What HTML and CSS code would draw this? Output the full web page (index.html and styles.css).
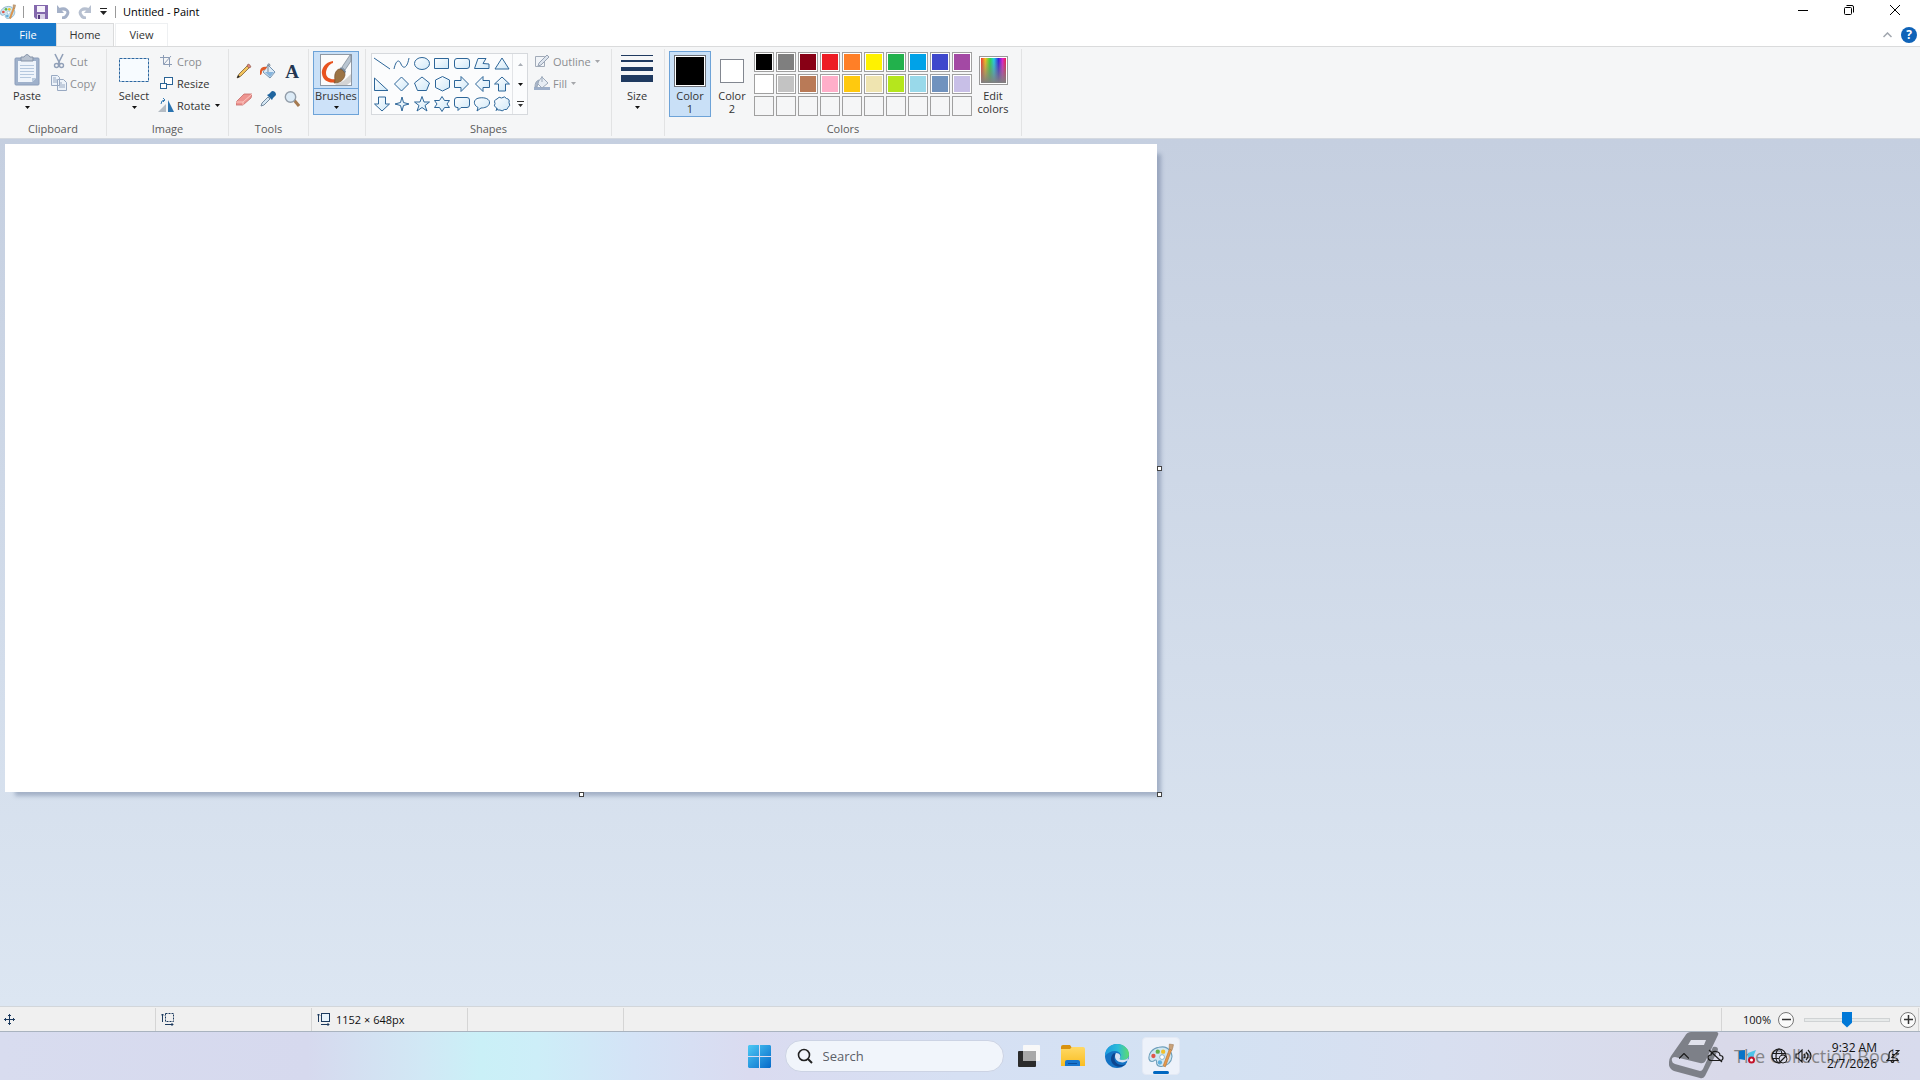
FILE: index.html
```html
<!DOCTYPE html>
<html lang="en">
<head>
    <meta charset="UTF-8">
    <meta name="viewport" content="width=device-width, initial-scale=1.0">
    <title>Untitled - Paint</title>
    <link rel="stylesheet" href="styles.css">
</head>
<body>
    <!-- Shared icons -->
    <svg class="defs" aria-hidden="true">
        <defs>
            <linearGradient id="shapeFill" x1="0" y1="0" x2="1" y2="1">
                <stop offset="0" stop-color="#ffffff"/>
                <stop offset="1" stop-color="#cfe8f8"/>
            </linearGradient>
            <linearGradient id="winFill" x1="0" y1="0" x2="1" y2="1">
                <stop offset="0" stop-color="#4cc9f5"/>
                <stop offset="1" stop-color="#0669c9"/>
            </linearGradient>
            <linearGradient id="rainbow">
                <stop offset="0" stop-color="#f03030"/>
                <stop offset=".17" stop-color="#f5c020"/>
                <stop offset=".36" stop-color="#30d840"/>
                <stop offset=".52" stop-color="#20d0e8"/>
                <stop offset=".7" stop-color="#3020e0"/>
                <stop offset=".86" stop-color="#e020d0"/>
                <stop offset="1" stop-color="#e82040"/>
            </linearGradient>
            <linearGradient id="greyDown" x1="0" y1="0" x2="0" y2="1">
                <stop offset="0" stop-color="#808080" stop-opacity="0"/>
                <stop offset="1" stop-color="#808080"/>
            </linearGradient>
            <linearGradient id="edgeTop" x1="0" y1="0" x2="1" y2="0">
                <stop offset="0" stop-color="#1a9ae0"/>
                <stop offset=".55" stop-color="#2bbcd8"/>
                <stop offset="1" stop-color="#5fdc6c"/>
            </linearGradient>
            <linearGradient id="folderFill" x1="0" y1="0" x2="0" y2="1">
                <stop offset="0" stop-color="#ffd965"/>
                <stop offset="1" stop-color="#f9bd22"/>
            </linearGradient>
            <symbol id="arrow" viewBox="0 0 5 3"><path d="M0 0h5L2.500 3z" fill="currentColor"/></symbol>
            <symbol id="palette" viewBox="0 0 24 24">
                <path d="M10 4C4 5 0 10 1 15c1 3 4 2 5 1 2-1 2 1 2 3 1 4 7 3 11 0 4-4 4-9 1-12-2-3-6-4-10-3z" fill="#cfe6f2" stroke="#6d9fbb"/>
                <circle cx="5" cy="12" r="2" fill="#e05548"/>
                <circle cx="9" cy="8" r="2" fill="#64b64c"/>
                <circle cx="14" cy="8" r="2" fill="#f0c02c"/>
                <circle cx="13" cy="13" r="2.2" fill="#fff" stroke="#7aa7c0" stroke-width=".7"/>
                <circle cx="11" cy="18" r="2" fill="#5fb0de"/>
                <path d="M14 21 20 5l2 1-6 16z" fill="#e89a4a" stroke="#b97434" stroke-width=".6"/>
                <path d="m19.500 5 .2-4 3.800.5-.5 2.500L22 7z" fill="#c9a27a" stroke="#9c7650" stroke-width=".5"/>
            </symbol>
        </defs>
    </svg>

    <div class="window">
        <header class="titlebar">
            <div class="quick-access">
                <svg class="app-icon" viewBox="0 0 24 24"><use href="#palette"/></svg>
                <span class="divider"></span>
                <button class="qa-btn" aria-label="Save">
                    <svg width="14" height="14" viewBox="0 0 14 14"><path d="M0 0h14v14H2l-2-2z" fill="#8468ad"/><path d="M3 1h8v6H3z" fill="#f5f1fa"/><path d="M3 9h8v5H3z" fill="#d8d0e6"/><path d="M4 10h2v4H4z" fill="#54397d"/></svg>
                </button>
                <button class="qa-btn" aria-label="Undo">
                    <svg width="14" height="14" viewBox="0 0 14 14"><path d="M3 5c6-3 11 1 8 5-1 2-3 3-5 3" fill="none" stroke="#a5b1c8" stroke-width="3"/><path d="M1 0v8h7z" fill="#a5b1c8"/></svg>
                </button>
                <button class="qa-btn" aria-label="Redo">
                    <svg width="14" height="14" viewBox="0 0 14 14"><path d="M11 5C5 2 0 6 3 10c1 2 3 3 5 3" fill="none" stroke="#b7c0d0" stroke-width="3"/><path d="M13 0v8H6z" fill="#b7c0d0"/></svg>
                </button>
                <button class="qa-more" aria-label="Customize Quick Access Toolbar">
                    <svg width="7" height="7" viewBox="0 0 7 7"><path d="M0 0h7v1H0zM0 3h7L3.500 7z" fill="#222"/></svg>
                </button>
                <span class="divider"></span>
            </div>
            <h1 class="title">Untitled - Paint</h1>
            <div class="window-controls">
                <button aria-label="Minimize"><svg width="10" height="10"><path d="M0 5.500h10" class="ctl"/></svg></button>
                <button aria-label="Restore"><svg width="10" height="10"><rect x=".5" y="2.500" width="7" height="7" rx="1" class="ctl"/><path d="M2.500.5H8q1.500 0 1.500 1.500v5.500" class="ctl"/></svg></button>
                <button aria-label="Close"><svg width="10" height="10"><path d="m0 0 10 10M10 0 0 10" class="ctl"/></svg></button>
            </div>
        </header>

        <nav class="tabs">
            <button class="tab tab-file">File</button>
            <button class="tab tab-active">Home</button>
            <button class="tab tab-view">View</button>
            <div class="tabs-end">
                <button aria-label="Collapse the Ribbon"><svg width="9" height="6"><path d="m.5 5 4-4 4 4" fill="none" stroke="#a0a6ae" stroke-width="1.500"/></svg></button>
                <button class="help" aria-label="Help">?</button>
            </div>
        </nav>

        <div class="ribbon">
            <section class="group group-clipboard">
                <div class="group-body">
                    <button class="big-btn paste">
                        <svg width="26" height="32" viewBox="0 0 26 32">
                            <rect x="1" y="4" width="24" height="27" rx="1" fill="#9fb1cb" stroke="#8b9dba"/>
                            <path d="M4 7h18v17l-4 4H4z" fill="#eef4fb"/>
                            <path d="M6 11.500h14M6 14.500h14M6 17.500h14M6 20.500h14M6 23.500h11" stroke="#b5c8de"/>
                            <path d="M22 24h-4v4z" fill="#b7c9dd"/>
                            <path d="M7 3h3q3-5 6 0h3v4H7z" fill="#b8c2d0" stroke="#8593a8"/>
                        </svg>
                        <span>Paste</span>
                        <svg class="arrow"><use href="#arrow"/></svg>
                    </button>
                    <div class="small-list">
                        <button class="small-btn disabled" disabled>
                            <svg width="16" height="16" viewBox="0 0 16 16"><path d="m4 1 5 10M12 1 7 11" stroke="#91a0b8" stroke-width="1.600"/><circle cx="5.500" cy="12.500" r="2" fill="none" stroke="#91a0b8" stroke-width="1.400"/><circle cx="10.500" cy="12.500" r="2" fill="none" stroke="#91a0b8" stroke-width="1.400"/></svg>
                            Cut
                        </button>
                        <button class="small-btn disabled" disabled>
                            <svg width="16" height="16" viewBox="0 0 16 16"><path d="M.5.5h6l2 2v8h-8zM6.500 4.500h6l3 3v8h-9z" fill="#edf3fa" stroke="#98a9c2"/><path d="M2 3h3M2 5h4M2 7h4M8 8h3M8 10h6M8 12h6" stroke="#98a9c2"/></svg>
                            Copy
                        </button>
                    </div>
                </div>
                <h2>Clipboard</h2>
            </section>

            <section class="group group-image">
                <div class="group-body">
                    <button class="big-btn select">
                        <svg width="30" height="32" viewBox="0 0 30 32"><rect x=".5" y="4.500" width="29" height="23" fill="#f7fbff" stroke="#2b66a0" stroke-dasharray="3 1"/></svg>
                        <span>Select</span>
                        <svg class="arrow"><use href="#arrow"/></svg>
                    </button>
                    <div class="small-list">
                        <button class="small-btn disabled" disabled>
                            <svg width="16" height="16" viewBox="0 0 16 16"><path d="M5.500 2v9.500H14M2 4.500h9.500V14M6 11l7-8" fill="none" stroke="#8d9db6"/></svg>
                            Crop
                        </button>
                        <button class="small-btn">
                            <svg width="16" height="16" viewBox="0 0 16 16"><rect x="6.500" y="2.500" width="8" height="7" fill="#fff" stroke="#2a6496"/><rect x="2.500" y="8.500" width="6" height="5" fill="#fff" stroke="#2a6496"/></svg>
                            Resize
                        </button>
                        <button class="small-btn">
                            <svg width="16" height="16" viewBox="0 0 16 16"><path d="M8 7v8H0z" fill="#b4bcc4"/><path d="M10 3v12h6z" fill="#2a73b0"/><path d="M3 7q0-4 4-4M5 1l2 2-2 2" fill="none" stroke="#337ab5"/></svg>
                            Rotate
                            <svg class="arrow"><use href="#arrow"/></svg>
                        </button>
                    </div>
                </div>
                <h2>Image</h2>
            </section>

            <section class="group group-tools">
                <div class="group-body tool-grid">
                    <button aria-label="Pencil"><svg width="16" height="16" viewBox="0 0 16 16"><path d="m1 15 2-4 9-9 2 2-9 9z" fill="#f2c35c" stroke="#7d6238" stroke-width=".8"/><path d="m1 15 1-3 2 2z" fill="#222"/><path d="m11 3 1-2q2 0 3 3l-2 1z" fill="#df8a7e" stroke="#8c5244" stroke-width=".6"/></svg></button>
                    <button aria-label="Fill with color"><svg width="16" height="16" viewBox="0 0 16 16"><path d="m8 2 7 7-5 6-7-6z" fill="#dceaf6" stroke="#7291af"/><path d="m5 9 9 0-4 5z" fill="#86b4dc"/><path d="M8 9V1q2-1 2 2" fill="none" stroke="#7a8795"/><path d="M7 4Q1 3 0 8v4q2 0 2-4l4-2z" fill="#e05a28"/></svg></button>
                    <button class="text-tool" aria-label="Text">A</button>
                    <button aria-label="Eraser"><svg width="16" height="16" viewBox="0 0 16 16"><path d="m0 11 8-8h8l-1 4-8 7H0z" fill="#ee9490" stroke="#c46c6a" stroke-width=".8"/><path d="m0 11 7 0 9-8M7 11v3" fill="none" stroke="#fbc6c0"/></svg></button>
                    <button aria-label="Color picker"><svg width="16" height="16" viewBox="0 0 16 16"><path d="m1 15 1-3 6-6 2 2-6 6z" fill="#d5e7f4" stroke="#667f96" stroke-width=".9"/><path d="m7 4 2-1 3-3q4 0 4 4l-3 3-1 2z" fill="#20659f"/></svg></button>
                    <button aria-label="Magnifier"><svg width="16" height="16" viewBox="0 0 16 16"><path d="m10 9 5 6" stroke="#a57a50" stroke-width="3"/><circle cx="6.500" cy="6" r="5.200" fill="#dcebf7" stroke="#929da9" stroke-width="1.400"/></svg></button>
                </div>
                <h2>Tools</h2>
            </section>

            <section class="group group-brushes">
                <div class="group-body">
                    <button class="big-btn brushes">
                        <svg width="32" height="32" viewBox="0 0 32 32">
                            <rect x=".5" y=".5" width="31" height="31" fill="#fbfbfb" stroke="#8e98a4"/>
                            <path d="M17 29c5 0 9-4 14-9v8l-4 3H15z" fill="#d4d4d4"/>
                            <path d="M13 7C5 8 1 15 2 20c1 7 8 10 15 8l-1-3C11 26 6 24 6 19c0-4 3-9 7-10z" fill="#e8531f"/>
                            <path d="m22 13 8-12h1v6l-6 9z" fill="#b9c5d1" stroke="#77828f" stroke-width=".7"/>
                            <path d="m21 13 5 4-1 3-6-4z" fill="#6f8296"/>
                            <path d="M19 15c3 0 6 3 6 6-1 5-5 8-11 8 2-2 0-5 1-9 1-3 2-4 4-5z" fill="#9b7344" stroke="#77502c" stroke-width=".7"/>
                        </svg>
                        <span>Brushes</span>
                        <svg class="arrow"><use href="#arrow"/></svg>
                    </button>
                </div>
            </section>

            <section class="group group-shapes">
                <div class="group-body">
                    <div class="gallery">
                        <div class="shape-grid">
                            <button aria-label="Line"><svg viewBox="0 0 18 18"><path d="m1 3 16 11"/></svg></button>
                            <button aria-label="Curve"><svg viewBox="0 0 18 18"><path class="open" d="M1 14C3 5 6 4 8 9s6 5 8-6"/></svg></button>
                            <button aria-label="Oval"><svg viewBox="0 0 18 18"><ellipse cx="9" cy="8.500" rx="7.500" ry="6"/></svg></button>
                            <button aria-label="Rectangle"><svg viewBox="0 0 18 18"><path d="M1.500 3.500h14v10h-14z"/></svg></button>
                            <button aria-label="Rounded rectangle"><svg viewBox="0 0 18 18"><rect x="1.500" y="3.500" width="15" height="10" rx="2.500"/></svg></button>
                            <button aria-label="Polygon"><svg viewBox="0 0 18 18"><path d="M1.500 13.500 5 3.500h8l-3 5 6 .5v4.500z"/></svg></button>
                            <button aria-label="Triangle"><svg viewBox="0 0 18 18"><path d="m9 3 7 11H2z"/></svg></button>
                            <button aria-label="Right triangle"><svg viewBox="0 0 18 18"><path d="M1.500 3 15 15.500H1.500z"/></svg></button>
                            <button aria-label="Diamond"><svg viewBox="0 0 18 18"><path d="m8.500 2 7 7-7 7-7-7z"/></svg></button>
                            <button aria-label="Pentagon"><svg viewBox="0 0 18 18"><path d="m9 2 7.500 6-3 7.500h-9L1.500 8z"/></svg></button>
                            <button aria-label="Hexagon"><svg viewBox="0 0 18 18"><path d="m9.500 1.500 7 3.500v7.500l-7 3.500-7-3.500V5z"/></svg></button>
                            <button aria-label="Right arrow"><svg viewBox="0 0 18 18"><path d="M1.500 5.500H8v-4L15.500 9 8 16.500v-4H1.500z"/></svg></button>
                            <button aria-label="Left arrow"><svg viewBox="0 0 18 18"><path d="M16.500 5.500H10v-4L2.500 9l7.500 7.500v-4h6.500z"/></svg></button>
                            <button aria-label="Up arrow"><svg viewBox="0 0 18 18"><path d="M5.500 16V9h-4L9 2l7.500 7h-4v7z"/></svg></button>
                            <button aria-label="Down arrow"><svg viewBox="0 0 18 18"><path d="M5.500 2v7h-4L9 16l7.500-7h-4V2z"/></svg></button>
                            <button aria-label="Four-point star"><svg viewBox="0 0 18 18"><path d="m9 2 1.500 5.500L16 9l-5.500 1.500L9 16l-1.500-5.500L2 9l5.500-1.500z"/></svg></button>
                            <button aria-label="Five-point star"><svg viewBox="0 0 18 18"><path d="m9 1.500 2 5.500h5.500L12 10.500l2 5.500-5-3.500L4 16l2-5.500L1.500 7H7z"/></svg></button>
                            <button aria-label="Six-point star"><svg viewBox="0 0 18 18"><path d="m9 1.500 2.500 4h5L14 9l2.500 3.500h-5L9 16.500l-2.500-4h-5L4 9 1.500 5.500h5z"/></svg></button>
                            <button aria-label="Rounded rectangular callout"><svg viewBox="0 0 18 18"><path d="M4 2.500h10q2.500 0 2.500 2.500v5q0 2.500-2.500 2.500H8L5 15.500v-3H4Q1.500 12.500 1.500 10V5Q1.500 2.500 4 2.500z"/></svg></button>
                            <button aria-label="Oval callout"><svg viewBox="0 0 18 18"><path d="M5 12.500C0 10 0 4 6 3c6-1 11 1 10.500 5S11 13 8 13l-4 3z"/></svg></button>
                            <button aria-label="Cloud callout"><svg viewBox="0 0 18 18"><path d="M4 4q2-3 4.500-1Q12 .5 13.500 3.500q3.500.5 2.500 4 2 3-1 5-1 3-3.500 2-2.500 2.500-4.500.5-3 1-3.500-2-3.500-2-1.500-4.500Q.5 5 4 4zM4 13l-1 3"/></svg></button>
                        </div>
                        <div class="gallery-scroll">
                            <button aria-label="Scroll up" disabled><svg width="5" height="3"><path d="M0 3h5L2.500 0z" fill="#a9aeb5"/></svg></button>
                            <button aria-label="Scroll down"><svg class="arrow"><use href="#arrow"/></svg></button>
                            <button aria-label="More shapes"><svg width="7" height="6"><path d="M0 0h7v1H0zM1 3h5L3.500 6z" fill="#333"/></svg></button>
                        </div>
                    </div>
                    <div class="small-list">
                        <button class="small-btn disabled" disabled>
                            <svg width="16" height="16" viewBox="0 0 16 16"><path d="M1.500 3.500h9v10h-9z" fill="#f1f4f8" stroke="#a2abb8"/><path d="m4 13 1-3 8-8 2 2-8 8z" fill="#dde4ed" stroke="#98a3b4"/></svg>
                            Outline
                            <svg class="arrow"><use href="#arrow"/></svg>
                        </button>
                        <button class="small-btn disabled" disabled>
                            <svg width="16" height="16" viewBox="0 0 16 16"><path d="M0 12h16v3H0z" fill="#9dafca"/><path d="m8 2 6 6-6 5-5-5z" fill="#e7edf4" stroke="#9ca9ba"/><path d="M8 7V1M5 5Q1 6 1 12h2z" fill="#a9b6ca" stroke="#9ca9ba"/></svg>
                            Fill
                            <svg class="arrow"><use href="#arrow"/></svg>
                        </button>
                    </div>
                </div>
                <h2>Shapes</h2>
            </section>

            <section class="group group-size">
                <div class="group-body">
                    <button class="big-btn size">
                        <svg width="32" height="32" viewBox="0 0 32 32"><path d="M0 1h32v1H0zM0 6h32v2H0zM0 13h32v4H0zM0 21h32v7H0z" fill="#1f3a60"/></svg>
                        <span>Size</span>
                        <svg class="arrow"><use href="#arrow"/></svg>
                    </button>
                </div>
            </section>

            <section class="group group-colors">
                <div class="group-body">
                    <button class="color-btn color-btn-active"><span class="well well-large"></span>Color<br>1</button>
                    <button class="color-btn"><span class="well well-small"></span>Color<br>2</button>
                    <div class="swatches">
                        <button class="swatch black" aria-label="Black"></button>
                        <button class="swatch gray" aria-label="Gray-50%"></button>
                        <button class="swatch dark-red" aria-label="Dark red"></button>
                        <button class="swatch red" aria-label="Red"></button>
                        <button class="swatch orange" aria-label="Orange"></button>
                        <button class="swatch yellow" aria-label="Yellow"></button>
                        <button class="swatch green" aria-label="Green"></button>
                        <button class="swatch turquoise" aria-label="Turquoise"></button>
                        <button class="swatch indigo" aria-label="Indigo"></button>
                        <button class="swatch purple" aria-label="Purple"></button>
                        <button class="swatch white" aria-label="White"></button>
                        <button class="swatch light-gray" aria-label="Gray-25%"></button>
                        <button class="swatch brown" aria-label="Brown"></button>
                        <button class="swatch rose" aria-label="Rose"></button>
                        <button class="swatch gold" aria-label="Gold"></button>
                        <button class="swatch light-yellow" aria-label="Light yellow"></button>
                        <button class="swatch lime" aria-label="Lime"></button>
                        <button class="swatch light-turquoise" aria-label="Light turquoise"></button>
                        <button class="swatch blue-gray" aria-label="Blue-gray"></button>
                        <button class="swatch lavender" aria-label="Lavender"></button>
                        <button class="swatch" aria-label="Custom 1"></button>
                        <button class="swatch" aria-label="Custom 2"></button>
                        <button class="swatch" aria-label="Custom 3"></button>
                        <button class="swatch" aria-label="Custom 4"></button>
                        <button class="swatch" aria-label="Custom 5"></button>
                        <button class="swatch" aria-label="Custom 6"></button>
                        <button class="swatch" aria-label="Custom 7"></button>
                        <button class="swatch" aria-label="Custom 8"></button>
                        <button class="swatch" aria-label="Custom 9"></button>
                        <button class="swatch" aria-label="Custom 10"></button>
                    </div>
                    <button class="color-btn">
                        <svg class="rainbow" width="29" height="29" viewBox="0 0 29 29"><rect x=".5" y=".5" width="28" height="28" fill="#fff" stroke="#999"/><path d="M2 2h25v25H2z" fill="url(#rainbow)"/><path d="M2 2h25v25H2z" fill="url(#greyDown)"/></svg>
                        Edit<br>colors
                    </button>
                </div>
                <h2>Colors</h2>
            </section>
        </div>

        <main class="workspace">
            <div class="canvas">
                <span class="handle handle-right"></span>
                <span class="handle handle-bottom"></span>
                <span class="handle handle-corner"></span>
            </div>
        </main>

        <footer class="statusbar">
            <div class="status-cell"><svg width="11" height="11" viewBox="0 0 11 11"><path d="M5.500 0v11M0 5.500h11M4 2l1.500-1.500L7 2M4 9l1.500 1.500L7 9M2 4 .5 5.500 2 7M9 4l1.500 1.500L9 7" fill="none" stroke="#1c3a5e"/></svg></div>
            <div class="status-cell"><svg width="14" height="13" viewBox="0 0 14 13"><rect x="4.500" y=".5" width="8" height="8" fill="none" stroke="#1c3a5e" stroke-dasharray="2 1"/><path d="M1.500 9V1M0 2.500 1.500 1 3 2.500M4 11.500h8M10.500 10l1.500 1.500-1.500 1.500" fill="none" stroke="#1c3a5e"/></svg></div>
            <div class="status-cell"><svg width="14" height="13" viewBox="0 0 14 13"><rect x="4.500" y=".5" width="8" height="8" fill="#e8f4fc" stroke="#1c3a5e"/><path d="M1.500 9V1M0 2.500 1.500 1 3 2.500M4 11.500h8M10.500 10l1.500 1.500-1.500 1.500" fill="none" stroke="#1c3a5e"/></svg>1152 × 648px</div>
            <div class="status-cell"></div>
            <div class="zoom">
                <label for="zoom">100%</label>
                <button class="zoom-btn" aria-label="Zoom out"><svg width="9" height="9"><path d="M0 4.500h9" class="zoom-mark"/></svg></button>
                <input type="range" id="zoom" min="0" max="100" value="50">
                <button class="zoom-btn" aria-label="Zoom in"><svg width="9" height="9"><path d="M0 4.500h9M4.500 0v9" class="zoom-mark"/></svg></button>
            </div>
        </footer>
    </div>

    <div class="taskbar">
        <div class="task-items">
            <button class="task-btn" aria-label="Start"><svg width="23" height="23" viewBox="0 0 23 23"><path d="M1 0h10v11H0V1zM12 0h10l1 1v10H12zM0 12h11v11H1l-1-1zM12 12h11v10l-1 1H12z" fill="url(#winFill)"/></svg></button>
            <label class="search">
                <svg width="16" height="16" viewBox="0 0 16 16"><circle cx="7" cy="7" r="5.500" fill="none" stroke="#222" stroke-width="1.600"/><path d="m11 11 4 4" stroke="#222" stroke-width="2"/></svg>
                <input type="text" placeholder="Search" aria-label="Search">
            </label>
            <button class="task-btn" aria-label="Task view"><svg width="24" height="24" viewBox="0 0 24 24"><rect x="6" y="1" width="17" height="16" rx="1" fill="#f8f8f8"/><rect x="1" y="7" width="18" height="16" rx="1" fill="#2b2b2b"/><path d="M6 7h13v10H6z" fill="#a8a8a8"/></svg></button>
            <button class="task-btn" aria-label="File Explorer"><svg width="24" height="24" viewBox="0 0 24 24"><path d="M0 3q0-2 2-2h7l2 3v4H0z" fill="#d9920e"/><path d="M0 5h9l2-2h11q2 0 2 2v17H0z" fill="url(#folderFill)"/><path d="M4 22v-4q0-2 2-2h11q2 0 2 2v4z" fill="#1876ce"/><path d="M7 19h9v1H7z" fill="#0b4f9c"/></svg></button>
            <button class="task-btn" aria-label="Microsoft Edge"><svg width="24" height="24" viewBox="0 0 24 24"><circle cx="12" cy="12" r="12" fill="#1473c4"/><path d="M0 12C0 5 5 0 12 0s12 5 12 10c0 4-3 6-6 6-2 0-4-1-3-2 2-3 0-7-5-7C6 7 2 9 0 12z" fill="url(#edgeTop)"/><path d="M9 9c-4 3-4 9 0 12 4 3 9 2 12-1-4 2-9 1-11-3-1-3-1-5 1-7z" fill="#0c4690"/><path d="M11 9c-2 3-1 8 4 9 3 1 6 0 9-3v4l-3 2 3-9c-1 3-4 4-6 4-3 0-4-1-3-2 1-2 0-5-4-5z" fill="#d7e2f3"/></svg></button>
            <button class="task-btn task-active" aria-label="Paint"><svg width="26" height="26" viewBox="0 0 24 24"><use href="#palette"/></svg></button>
        </div>
        <div class="tray">
            <button aria-label="Show hidden icons"><svg width="10" height="6"><path d="m0 5.500 5-5 5 5" class="tray-line"/></svg></button>
            <button aria-label="OneDrive"><svg width="17" height="14"><path d="M4 11.500Q1 11 1 8.500T4 6q1-4 5-3.500t4 4q3 0 3 2.500t-3 2.500zM2 1l13 12" class="tray-line"/></svg></button>
            <button aria-label="Update status"><svg width="17" height="16"><path d="m0 3 6-1v10l-6-1z" fill="#0873c8"/><path d="m9 5 8-3-3 7-5 1z" fill="#4cc3e8"/><circle cx="12.500" cy="12" r="2.500" fill="#fff" stroke="#c4122a" stroke-width="2"/></svg></button>
            <button aria-label="Network"><svg width="17" height="16"><circle cx="8" cy="8" r="7" class="tray-line"/><ellipse cx="8" cy="8" rx="3" ry="7" class="tray-line"/><path d="M1 5.500h14M1 10.500h7" class="tray-line"/><circle cx="12" cy="11" r="4" fill="#d9dbe9" stroke="#222"/><path d="m9 14 6-6" class="tray-line"/></svg></button>
            <button aria-label="Volume"><svg width="17" height="14"><path d="M1 5h2l4-4v12L3 9H1zM9 5q2 2 0 4M11 3q4 4 0 8M13 1q6 6 0 12" class="tray-line"/></svg></button>
            <div class="clock">9:32 AM<br>2/7/2026</div>
            <button aria-label="Notifications"><svg width="14" height="14"><path d="M7 1.500Q3 1.500 3 6v3l-2 2.500h11L10.500 9M5 12q1.500 3 3 0M9.500 1.500H13L9.500 5H13M6 5.500h2.500L6 8.500h2.500" class="tray-line"/></svg></button>
        </div>
        <div class="watermark">
            <svg width="50" height="47" viewBox="0 0 50 47"><path d="M22 0h26q2 1 1 3L37 28q-2 4-6 3L6 25q-4 0-3 4 0 2 3 3l25 7q2 0 3-2l10-22q5-1 5 3L36 44q-2 3-5 2L5 39q-6-3-5-9 0-3 2-6L16 4q2-4 6-4z" fill="#6e7178"/><path d="M22 8h15l-2 5H19z" fill="#e3e4ed"/></svg>
            <span>The Collection Book</span>
        </div>
    </div>
</body>
</html>
```
FILE: styles.css
```css
* {
    margin: 0;
    padding: 0;
    box-sizing: border-box;
}

body {
    font-family: 'Open Sans', 'Noto Sans', sans-serif;
    font-size: 11px;
    line-height: 13px;
    color: #333;
    height: 100vh;
    display: flex;
    flex-direction: column;
    overflow: hidden;
}

button, input {
    font: inherit;
    color: inherit;
    background: none;
    border: none;
}

button {
    display: flex;
    align-items: center;
    justify-content: center;
}

svg {
    display: block;
    flex: none;
}

.defs {
    position: absolute;
    width: 0;
    height: 0;
}

.arrow {
    width: 5px;
    height: 3px;
    color: #111;
}

.window {
    flex: 1;
    display: flex;
    flex-direction: column;
    min-height: 0;
}

/* Title bar */
.titlebar {
    display: flex;
    height: 23px;
    background: #fff;
}

.quick-access {
    display: flex;
    align-items: center;
}

.app-icon {
    width: 16px;
    height: 16px;
    margin-right: 7px;
}

.divider {
    width: 1px;
    height: 12px;
    background: #999;
}

.qa-btn {
    width: 22px;
}

.divider + .qa-btn {
    margin-left: 6px;
}

.qa-more {
    width: 14px;
    margin-right: 5px;
}

.title {
    font-size: 11px;
    font-weight: 400;
    line-height: 23px;
    color: #000;
    margin-left: 7px;
}

.window-controls {
    display: flex;
    margin-left: auto;
    padding: 0 2px 3px 0;
}

.window-controls button {
    width: 46px;
}

.ctl {
    fill: none;
    stroke: #000;
}

/* Tabs */
.tabs {
    display: flex;
    height: 23px;
    background: #fff;
}

.tab {
    width: 58px;
    padding-bottom: 1px;
}

.tab-file {
    width: 56px;
    background: #1979ca;
    color: #fff;
}

.tab-active {
    background: #f5f6f7;
    border: 1px solid #dadbdc;
    border-bottom: none;
}

.tab-view {
    width: 53px;
    margin-left: 1px;
    border: 1px solid #eef0f2;
    border-bottom: none;
}

.tabs-end {
    display: flex;
    align-items: center;
    gap: 9px;
    margin-left: auto;
    padding-right: 3px;
}

.help {
    width: 16px;
    height: 16px;
    border-radius: 50%;
    background: #0f63b8;
    color: #fff;
    font-size: 12px;
    font-weight: 700;
}

/* Ribbon */
.ribbon {
    display: flex;
    height: 93px;
    background: #f5f6f7;
    border-top: 1px solid #dadbdc;
    border-bottom: 1px solid #d4d9e0;
}

.group {
    display: flex;
    flex-direction: column;
    margin: 2px 0;
    padding-top: 2px;
    border-right: 1px solid #e2e3e4;
}

.group-body {
    display: flex;
    align-items: flex-start;
    height: 68px;
}

.group h2 {
    margin-top: auto;
    padding-bottom: 1px;
    font-size: 11px;
    font-weight: 400;
    line-height: 13px;
    text-align: center;
    color: #5a5a5a;
}

.group-clipboard {
    width: 107px;
}

.group-image {
    width: 122px;
}

.group-tools {
    width: 80px;
}

.group-brushes {
    width: 57px;
}

.group-shapes {
    width: 246px;
}

.group-size {
    width: 53px;
}

.group-colors {
    width: 357px;
}

.big-btn {
    flex-direction: column;
    justify-content: flex-start;
    height: 66px;
    padding-top: 3px;
    margin-left: 4px;
    width: 46px;
}

.big-btn span {
    padding: 3px 0 4px;
}

.brushes {
    height: 64px;
    padding-top: 2px;
    background: linear-gradient(#c9e0f7 36px, #6da3d8 36px, #6da3d8 37px, #cde2f9 37px);
    border: 1px solid #6da3d8;
}

.size {
    width: 42px;
}

.small-list {
    display: flex;
    flex-direction: column;
    margin: -1px 0 0 1px;
}

.small-btn {
    height: 22px;
    gap: 3px;
    justify-content: flex-start;
}

.small-btn .arrow {
    margin-left: 1px;
}

.disabled {
    color: #8b8d91;
}

.disabled .arrow {
    color: #a4a6aa;
}

.tool-grid {
    display: grid;
    grid-template-columns: repeat(3, 24px);
    grid-template-rows: repeat(2, 28px);
    padding: 6px 0 0 3px;
}

.tool-grid button {
    height: 28px;
}

.text-tool {
    font-family: 'Liberation Serif', serif;
    font-size: 19px;
    font-weight: 700;
    color: #233752;
}

.gallery {
    display: flex;
    margin: 2px 5px 0;
    border: 1px solid #d6d9dd;
    background: #fbfcfd;
}

.shape-grid {
    display: grid;
    grid-template-columns: repeat(7, 20px);
    grid-template-rows: repeat(3, 20px);
}

.shape-grid svg {
    width: 18px;
    height: 18px;
    fill: url(#shapeFill);
    stroke: #2d6699;
}

.shape-grid .open {
    fill: none;
}

.gallery-scroll {
    display: grid;
    grid-template-rows: repeat(3, 20px);
    width: 15px;
    border-left: 1px solid #e2e4e7;
}

/* Colors */
.color-btn {
    display: block;
    width: 42px;
    height: 66px;
    text-align: center;
}

.group-colors .group-body {
    padding-left: 4px;
}

.color-btn-active {
    background: #c9e0f7;
    border: 1px solid #6da3d8;
}

.well {
    display: block;
    border: 1px solid #828790;
    background: #fff;
}

.well-large {
    width: 32px;
    height: 32px;
    margin: 2px auto;
    border-color: #6d7178;
    background: #000;
    box-shadow: inset 0 0 0 1px #fff;
}

.well-small {
    width: 24px;
    height: 24px;
    margin: 6px auto;
}

.rainbow {
    margin: 3px auto 4px;
}

.swatches {
    display: grid;
    grid-template-columns: repeat(10, 20px);
    grid-auto-rows: 20px;
    gap: 2px;
    margin: 1px 0 0 1px;
}

.swatch {
    padding: 1px;
    border: 1px solid #a0a0a0;
}

.swatch::before {
    content: '';
    width: 100%;
    height: 100%;
}

.swatch:nth-child(-n+20) {
    background-color: #fff;
}

.black::before { background: #000; }
.gray::before { background: #7f7f7f; }
.dark-red::before { background: #880015; }
.red::before { background: #ed1c24; }
.orange::before { background: #ff7f27; }
.yellow::before { background: #fff200; }
.green::before { background: #22b14c; }
.turquoise::before { background: #00a2e8; }
.indigo::before { background: #3f48cc; }
.purple::before { background: #a349a4; }
.white::before { background: #fff; }
.light-gray::before { background: #c3c3c3; }
.brown::before { background: #b97a57; }
.rose::before { background: #ffaec9; }
.gold::before { background: #ffc90e; }
.light-yellow::before { background: #efe4b0; }
.lime::before { background: #b5e61d; }
.light-turquoise::before { background: #99d9ea; }
.blue-gray::before { background: #7092be; }
.lavender::before { background: #c8bfe7; }

/* Workspace */
.workspace {
    flex: 1;
    min-height: 0;
    padding: 5px;
    background: linear-gradient(#c5cfe0, #dce6f2);
}

.canvas {
    position: relative;
    width: 1152px;
    height: 648px;
    background: #fff;
    box-shadow: 7px 7px 4px -3px rgba(70, 90, 125, 0.35);
}

.handle {
    position: absolute;
    width: 5px;
    height: 5px;
    background: #fff;
    border: 1px solid #444;
}

.handle-right {
    left: 100%;
    top: 50%;
    margin-top: -2px;
}

.handle-bottom {
    left: 50%;
    top: 100%;
    margin-left: -2px;
}

.handle-corner {
    left: 100%;
    top: 100%;
}

/* Status bar */
.statusbar {
    display: flex;
    height: 26px;
    padding: 1px 1px 0 0;
    background: #f0f0f0;
    border-top: 1px solid #d2d6da;
    border-bottom: 1px solid #a9b3bf;
    color: #111;
}

.status-cell {
    display: flex;
    align-items: center;
    gap: 5px;
    width: 156px;
    padding-left: 4px;
    border-right: 1px solid #d5d5d5;
}

.status-cell + .status-cell {
    padding-left: 5px;
}

.zoom {
    display: flex;
    align-items: center;
    margin-left: auto;
    padding: 0 2px 0 21px;
    border-left: 1px solid #d5d5d5;
    border-right: 1px solid #d5d5d5;
}

.zoom-btn {
    width: 16px;
    height: 16px;
    border: 1px solid #777;
    border-radius: 50%;
    background: #fafafa;
}

label + .zoom-btn {
    margin-left: 7px;
}

.zoom-mark {
    stroke: #333;
    stroke-width: 1.5;
}

.zoom input {
    width: 86px;
    height: 16px;
    margin: 0 10px;
    appearance: none;
}

.zoom input::-webkit-slider-runnable-track {
    height: 4px;
    background: #e7eaea;
    border: 1px solid #d0d3d4;
}

.zoom input::-webkit-slider-thumb {
    appearance: none;
    width: 10px;
    height: 16px;
    margin-top: -7px;
    background: #0078d7;
    clip-path: polygon(0 0, 100% 0, 100% 70%, 50% 100%, 0 70%);
}

/* Taskbar */
.taskbar {
    position: relative;
    display: grid;
    grid-template-columns: 1fr auto 1fr;
    align-items: center;
    height: 48px;
    background: linear-gradient(90deg, #d8dcef 0%, #d6d9ee 16%, #d1e8f5 22%, #caf0f7 25%, #cdeef8 28%, #d4e3f6 33%, #dadbf0 39%, #d6e0f3 50%, #d3e2f3 62%, #d8dff0 75%, #d9d9e9 90%, #d8dbed 100%);
}

.task-items {
    grid-column: 2;
    display: flex;
    align-items: center;
    gap: 6px;
}

.task-btn {
    width: 38px;
    height: 38px;
    border-radius: 4px;
}

.task-active {
    position: relative;
    background: #edf2fa;
    border: 1px solid #e3e9f4;
}

.task-active::after {
    content: '';
    position: absolute;
    bottom: 0;
    width: 16px;
    height: 3px;
    border-radius: 2px;
    background: #0067c0;
}

.search {
    display: flex;
    align-items: center;
    gap: 10px;
    width: 219px;
    height: 32px;
    padding: 0 11px;
    border: 1px solid #ccd3e4;
    border-radius: 16px;
    background: #f1f5fb;
}

.search input {
    width: 160px;
    font-size: 13px;
    line-height: 20px;
}

.search input::placeholder {
    color: #5c6068;
}

.tray {
    position: relative;
    z-index: 1;
    display: flex;
    align-items: center;
    justify-content: flex-end;
    padding-right: 20px;
    color: #111;
}

.tray button {
    margin-right: 7px;
}

.tray button:first-child {
    margin-right: 18px;
}

.tray button:nth-child(2),
.tray button:nth-child(3) {
    margin-right: 15px;
}

.tray button:last-child {
    margin: 0 0 0 9px;
}

.tray-line {
    fill: none;
    stroke: #1b1b1b;
    stroke-width: 1.2;
}

.clock {
    width: 58px;
    font-size: 12px;
    line-height: 16px;
    text-align: right;
}

.watermark {
    position: absolute;
    right: 20px;
    top: 0;
    display: flex;
    align-items: center;
    gap: 15px;
    font-size: 18px;
    line-height: 24px;
    color: #777;
    opacity: 0.85;
    pointer-events: none;
}
```
